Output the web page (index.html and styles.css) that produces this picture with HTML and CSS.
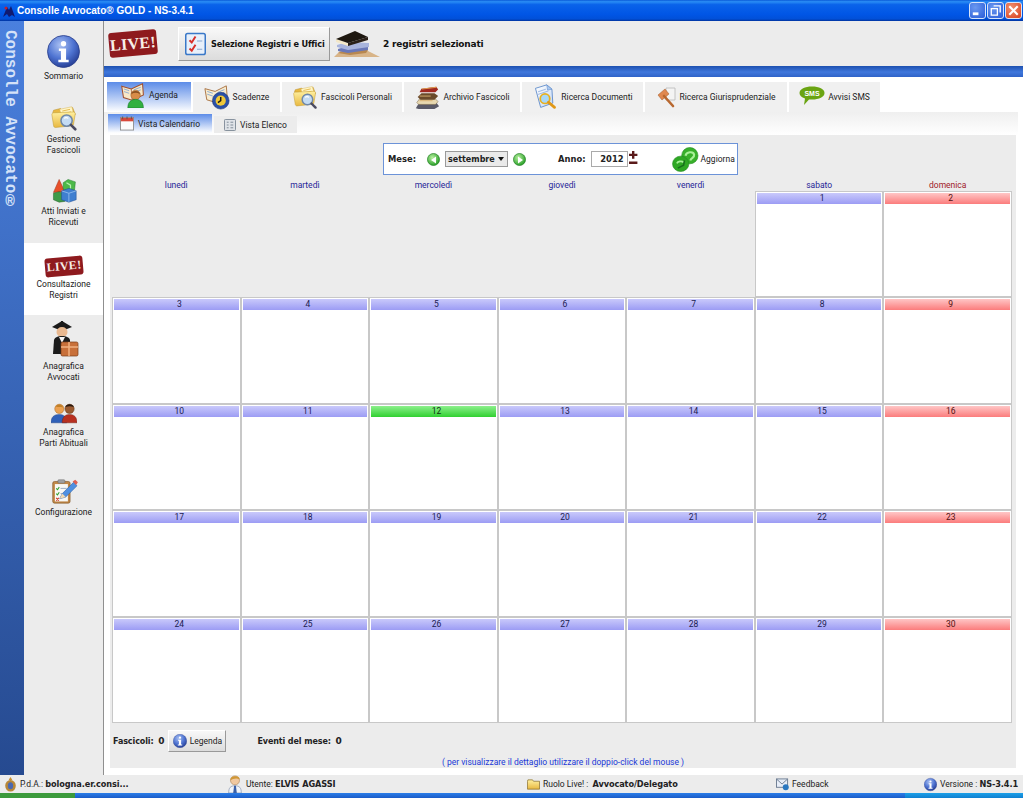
FILE: index.html
```html
<!DOCTYPE html>
<html lang="it">
<head>
    <meta charset="UTF-8">
    <title>Consolle Avvocato GOLD - NS-3.4.1</title>
    <link rel="stylesheet" href="styles.css">
</head>
<body>
    <!-- icone riutilizzate -->
    <svg class="sprite" aria-hidden="true">
        <defs>
            <radialGradient id="g-info" cx="40%" cy="30%" r="75%">
                <stop offset="0" stop-color="#a9c0f2"/><stop offset=".55" stop-color="#4f74d2"/><stop offset="1" stop-color="#22398f"/>
            </radialGradient>
            <linearGradient id="g-folder" x1="0" y1="0" x2="0" y2="1">
                <stop offset="0" stop-color="#fff0a0"/><stop offset="1" stop-color="#e8b840"/>
            </linearGradient>
            <radialGradient id="g-green" cx="40%" cy="35%" r="70%">
                <stop offset="0" stop-color="#b8f0a0"/><stop offset="1" stop-color="#1f9a20"/>
            </radialGradient>
            <linearGradient id="g-paper" x1="0" y1="0" x2="1" y2="1">
                <stop offset="0" stop-color="#ffffff"/><stop offset="1" stop-color="#c4d8f4"/>
            </linearGradient>
        </defs>
        <symbol id="i-info" viewBox="0 0 32 32">
            <circle cx="16" cy="16" r="15.5" fill="url(#g-info)" stroke="#2a3f8c" stroke-width=".8"/>
            <circle cx="16" cy="8.5" r="2.6" fill="#fff"/>
            <path d="M11.5 13h7v11h2.5v2.5h-10V24h2.5v-8.500h-2z" fill="#fff"/>
        </symbol>
        <symbol id="i-folder" viewBox="0 0 32 30">
            <path d="M3 9l1-3 8-2 2 2 12-3 3 8z" fill="#e8b840" stroke="#b89030" stroke-width=".6"/>
            <path d="M11 5l14-3 3 11-14 3z" fill="#fff6c8" stroke="#d8b860" stroke-width=".6"/>
            <path d="M14 7l9-2M15 10l9-2" stroke="#e0b040" stroke-width="1"/>
            <path d="M2 11c0-1 1-2 2-2l23-1c1 0 2 1 2 2l-2 12c0 1-1 2-2 2l-19 2c-1 0-2-1-2-2z" fill="url(#g-folder)" stroke="#c09a30" stroke-width=".6"/>
            <circle cx="19" cy="18" r="6.500" fill="#c4dcf4" stroke="#7088a8" stroke-width="1.800"/>
            <path d="M16 15.500a4 4 0 0 1 5 0" stroke="#fff" stroke-width="1.300" fill="none"/>
            <path d="M24 23l5 5" stroke="#4a4a60" stroke-width="3" stroke-linecap="round"/>
        </symbol>
        <symbol id="i-shapes" viewBox="0 0 32 32">
            <path d="M3 19L10 3l7 15z" fill="#e8502a" stroke="#9a2a10" stroke-width=".6"/>
            <path d="M15 7l6-4 9 3-1 10-6 2-8-3z" fill="#4cb848" stroke="#20782a" stroke-width=".6"/>
            <path d="M19 7l5 3v4" stroke="#b8f0b0" stroke-width="1.500" fill="none"/>
            <path d="M3 20l7-2 7 3v9l-7 1-7-3z" fill="#3f9a48" stroke="#28602a" stroke-width=".6"/>
            <path d="M13 17l9-3 9 3v11l-9 3-9-3z" fill="#3f7fd0" stroke="#1c4a90" stroke-width=".6"/>
            <path d="M13 17l9 3 9-3M22 20v11" stroke="#a0c8f4" stroke-width=".9" fill="none"/>
        </symbol>
        <symbol id="i-graduate" viewBox="0 0 30 38">
            <path d="M3 7l10-6 10 6-10 4z" fill="#1a1a1a"/>
            <path d="M13 4v-3" stroke="#1a1a1a" stroke-width="2"/>
            <ellipse cx="13" cy="12" rx="5.500" ry="5" fill="#e8b890"/>
            <path d="M4 34l1-14c1-3 4-4 8-4s7 1 8 4v14z" fill="#1c1c1c"/>
            <path d="M10 17l3 6 3-6z" fill="#f4f4f4"/>
            <rect x="12" y="22" width="17" height="14" rx="1.500" fill="#c8703a" stroke="#7a3c18" stroke-width=".7"/>
            <path d="M12 27h17M20 22v14" stroke="#f0b080" stroke-width="1.500"/>
        </symbol>
        <symbol id="i-people" viewBox="0 0 28 22">
            <circle cx="9" cy="6" r="5" fill="#eba050" stroke="#a06020" stroke-width=".5"/>
            <path d="M5 3.500c2-3 7-3 8 1-3-1-5 0-8-1z" fill="#c08028"/>
            <path d="M0 21c0-6 3-9 9-9 5 0 8 3 8 9z" fill="#3060b8" stroke="#1c3c80" stroke-width=".5"/>
            <circle cx="20" cy="6" r="5" fill="#9a5a30" stroke="#5a3010" stroke-width=".5"/>
            <path d="M15.500 4c1-4 8-4 9 0-3-1-6-1-9 0z" fill="#2a1a10"/>
            <path d="M12 21c0-6 3-9 8-9s8 3 8 9z" fill="#b83020" stroke="#701c10" stroke-width=".5"/>
        </symbol>
        <symbol id="i-config" viewBox="0 0 30 30">
            <rect x="2" y="4" width="20" height="25" rx="2" fill="#c08848" stroke="#7a5020" stroke-width=".7"/>
            <rect x="4.500" y="7" width="15" height="20" fill="#f8f8f4"/>
            <rect x="8" y="2" width="8" height="4" rx="1" fill="#a0a0a0" stroke="#606060" stroke-width=".5"/>
            <path d="M6 12l1.500 1.500 2-3M6 18l1.500 1.500 2-3" stroke="#30a030" stroke-width="1.200" fill="none"/>
            <path d="M6 23l3 3M9 23l-3 3" stroke="#d03020" stroke-width="1.200"/>
            <path d="M11 12h7M11 18h5" stroke="#90a0b8" stroke-width="1"/>
            <path d="M10 24l3-6L26 5l4 4-13 13z" fill="#4f90e0" stroke="#2a5aa0" stroke-width=".6"/>
            <path d="M10 24l3-6 4 4z" fill="#f0d8b0"/>
            <path d="M25 4l3-2 3 3-2 3z" fill="#e06050"/>
        </symbol>
        <symbol id="i-check" viewBox="0 0 28 30">
            <rect x="1" y="1" width="26" height="28" rx="2.500" fill="#e8f0fa" stroke="#3a78c8" stroke-width="2"/>
            <path d="M6 10l3 3 5-8M6 21l3 3 5-8" stroke="#d8302a" stroke-width="2.600" fill="none"/>
            <path d="M16 11h7M16 22h7" stroke="#8aa8d0" stroke-width="1.500"/>
        </symbol>
        <symbol id="i-books" viewBox="0 0 46 28">
            <path d="M0 27l6-6 26-1 14 7z" fill="#d8b488"/>
            <path d="M4 23l10-4 20 1-2 3-16 2z" fill="#b88850"/>
            <path d="M4 19l10-3 20 1v3l-20 3-10-2z" fill="#6a78b8"/>
            <path d="M3 15l10-3 22 1v4l-21 3-11-3z" fill="#a8b4dc"/>
            <path d="M2 9l12 4v3L2 12z" fill="#f4e8c8"/>
            <path d="M14 13l20-6v3L14 16z" fill="#2a2018"/>
            <path d="M2 9l19-8 13 6-20 6z" fill="#1e1810"/>
        </symbol>
        <symbol id="i-agenda" viewBox="0 0 28 30">
            <path d="M1 5l11 3 13-6 1 13-13 6L3 18z" fill="#f8e8c8" stroke="#a05030" stroke-width="1.200"/>
            <path d="M12 8l1 13" stroke="#a05030" stroke-width=".8"/>
            <path d="M3.500 8l6 2M3.500 11l6 2M15 9l8-3M15 12l8-3" stroke="#7aa0d0" stroke-width=".9"/>
            <circle cx="17" cy="15" r="5.500" fill="#d88c48" stroke="#8a5020" stroke-width=".5"/>
            <path d="M12 14c0-5 10-5 10 0-3-2-7-2-10 0z" fill="#8a5020"/>
            <path d="M8 30c0-7 4-10 9-10s9 3 9 10z" fill="#30b040" stroke="#1a7028" stroke-width=".6"/>
        </symbol>
        <symbol id="i-clock" viewBox="0 0 28 28">
            <path d="M1 5l11 3 12-6 1 12-12 6L3 17z" fill="#f8ecd0" stroke="#a87040" stroke-width="1"/>
            <path d="M3.500 8l6 2M3.500 11l6 2M15 9l7-3M15 12l7-3" stroke="#7aa0d0" stroke-width=".9"/>
            <circle cx="18" cy="18" r="9" fill="#2a50a8" stroke="#1a2f70" stroke-width=".6"/>
            <circle cx="18" cy="18" r="5.500" fill="#f0c838"/>
            <path d="M18 14v4l-3 2" stroke="#1a1a1a" stroke-width="1.600" fill="none"/>
        </symbol>
        <symbol id="i-archive" viewBox="0 0 28 28">
            <path d="M2 26l3-5 19-1 3 4-5 3H5z" fill="#5a5a68"/>
            <path d="M3 20l3-4h17l3 3-3 3H5z" fill="#e8d8b0" stroke="#6a5a40" stroke-width=".5"/>
            <path d="M4 14l4-4h14l4 3-4 4H7z" fill="#6a4a2a"/>
            <path d="M6 9l2-4 16-2 2 3-3 3H8z" fill="#a02820"/>
            <path d="M8 5l16-2 .6 1L8.600 6z" fill="#e0a050"/>
            <path d="M6 13h12M6 18h14" stroke="#d8b070" stroke-width="1"/>
        </symbol>
        <symbol id="i-docsearch" viewBox="0 0 28 30">
            <path d="M3 5l13-4 6 5 1 16-14 5z" fill="url(#g-paper)" stroke="#5a88c8" stroke-width="1"/>
            <path d="M16 1l1 6 5-1z" fill="#a8c8f0" stroke="#5a88c8" stroke-width=".6"/>
            <path d="M6 9l9-3M6 12l12-4" stroke="#88a8d8" stroke-width=".9"/>
            <circle cx="14" cy="17" r="5.500" fill="#a8d8f8" stroke="#e8b020" stroke-width="2"/>
            <path d="M18 21l7 6" stroke="#e09818" stroke-width="3.200" stroke-linecap="round"/>
        </symbol>
        <symbol id="i-gavel" viewBox="0 0 20 22">
            <path d="M9 2h9v12H9z" fill="#f4f4f4" stroke="#b8b8b8" stroke-width=".8"/>
            <path d="M1 9l7-6 4 5-7 6z" fill="#e08850" stroke="#a05828" stroke-width=".5"/>
            <path d="M7 10l9 10" stroke="#b86830" stroke-width="2.600" stroke-linecap="round"/>
        </symbol>
        <symbol id="i-calendar" viewBox="0 0 16 16">
            <rect x=".5" y="1" width="15" height="14.500" fill="#fbfbfb" stroke="#8a8a8a"/>
            <rect x="1" y="1.500" width="14" height="4" fill="#d8483a"/>
            <path d="M3 0v3M8 0v3M13 0v3" stroke="#555" stroke-width="1"/>
        </symbol>
        <symbol id="i-list" viewBox="0 0 13 13">
            <rect x=".5" y=".5" width="12" height="12" rx="1" fill="#dfe3e8" stroke="#7b8794"/>
            <path d="M3 3.500h2M7 3.500h3M3 6.500h2M7 6.500h3M3 9.500h2M7 9.500h3" stroke="#7b8794"/>
        </symbol>
        <symbol id="i-round" viewBox="0 0 14 14">
            <circle cx="7" cy="7" r="6.500" fill="url(#g-green)" stroke="#1a7a1a" stroke-width=".7"/>
        </symbol>
        <symbol id="i-refresh" viewBox="0 0 28 26">
            <circle cx="18.500" cy="9" r="8.500" fill="#38b02a" stroke="#1f8a20" stroke-width=".6"/>
            <ellipse cx="9" cy="17.500" rx="8.500" ry="8" fill="#2fa824" stroke="#1f8a20" stroke-width=".6"/>
            <path d="M14 9c1-4 8-5 9-1 .500 3-3 3-4 6" stroke="#a8f098" stroke-width="2.200" fill="none"/>
            <path d="M5 17c1-2 5-3 7-1" stroke="#a8f098" stroke-width="1.800" fill="none"/>
            <path d="M6 22l6-3 1-5" stroke="#176f1c" stroke-width="1.600" fill="none"/>
        </symbol>
        <symbol id="i-emblem" viewBox="0 0 13 17">
            <path d="M6.500 0l2 3-2 1-2-1z" fill="#c89030"/>
            <ellipse cx="6.500" cy="10" rx="6" ry="6.500" fill="#b88838"/>
            <ellipse cx="6.500" cy="10" rx="3" ry="4" fill="#4a68b0"/>
        </symbol>
        <symbol id="i-user" viewBox="0 0 16 20">
            <circle cx="8" cy="6" r="5" fill="#f0c8a0" stroke="#a07a50" stroke-width=".6"/>
            <path d="M3 6c-1-6 11-6 10-1-3-2-7-1-10 1z" fill="#d09838"/>
            <path d="M1 20c0-6 2-8 7-8s7 2 7 8z" fill="#f0f4fa" stroke="#7a8aa8" stroke-width=".7"/>
            <path d="M7 12h2l1 8H6z" fill="#3a60a8"/>
        </symbol>
        <symbol id="i-smallfolder" viewBox="0 0 14 11">
            <path d="M.5 2l.5-1.500h5L7 2h6.500v8.500H.5z" fill="url(#g-folder)" stroke="#8a7030" stroke-width=".8"/>
        </symbol>
        <symbol id="i-feedback" viewBox="0 0 14 13">
            <rect x=".5" y=".5" width="12" height="9" fill="#e8eef8" stroke="#6a7a90"/>
            <path d="M1 1l5.500 5L12 1" stroke="#6a7a90" fill="none"/>
            <circle cx="10.500" cy="9.500" r="3.200" fill="#2a78c0"/>
        </symbol>
    </svg>

    <div class="window">
        <div class="titlebar">
            <svg class="title-logo" viewBox="0 0 14 14"><path d="M1 13L5 3l2 3 2-4 4 11-3-2-3 2-2-3z" fill="#101a70"/><circle cx="4" cy="4" r="1.500" fill="#c02030"/></svg>
            <span class="title-text">Consolle Avvocato® GOLD - NS-3.4.1</span>
            <div class="win-controls">
                <div class="win-btn">
                    <svg viewBox="0 0 16 16"><rect x="3" y="10" width="6" height="3" fill="#fff"/></svg>
                </div>
                <div class="win-btn">
                    <svg viewBox="0 0 16 16"><path d="M6 3h7v7M3.500 6H10v7H3.500z" stroke="#fff" stroke-width="1.400" fill="none"/></svg>
                </div>
                <div class="win-btn close">
                    <svg viewBox="0 0 16 16"><path d="M3.500 3.500l9 9M12.500 3.500l-9 9" stroke="#fff" stroke-width="2.200"/></svg>
                </div>
            </div>
        </div>

        <div class="app">
            <div class="strip"><span class="strip-text">Consolle Avvocato®</span></div>

            <nav class="sidebar">
                <div class="nav-item up">
                    <svg class="ico-33"><use href="#i-info"/></svg>
                    <span class="nav-label">Sommario</span>
                </div>
                <div class="nav-item up">
                    <svg class="ico-30"><use href="#i-folder"/></svg>
                    <span class="nav-label">Gestione<br>Fascicoli</span>
                </div>
                <div class="nav-item up">
                    <svg class="ico-30"><use href="#i-shapes"/></svg>
                    <span class="nav-label">Atti Inviati e<br>Ricevuti</span>
                </div>
                <div class="nav-item active">
                    <div class="live small">LIVE!</div>
                    <span class="nav-label">Consultazione<br>Registri</span>
                </div>
                <div class="nav-item">
                    <svg class="ico-grad"><use href="#i-graduate"/></svg>
                    <span class="nav-label">Anagrafica<br>Avvocati</span>
                </div>
                <div class="nav-item down">
                    <svg class="ico-people"><use href="#i-people"/></svg>
                    <span class="nav-label">Anagrafica<br>Parti Abituali</span>
                </div>
                <div class="nav-item down">
                    <svg class="ico-30"><use href="#i-config"/></svg>
                    <span class="nav-label">Configurazione</span>
                </div>
            </nav>

            <main class="main">
                <div class="topbar">
                    <div class="live">LIVE!</div>
                    <button class="select-btn">
                        <svg class="ico-check"><use href="#i-check"/></svg>
                        Selezione Registri e Uffici
                    </button>
                    <svg class="ico-books"><use href="#i-books"/></svg>
                    <span class="selected-count">2 registri selezionati</span>
                </div>
                <div class="blue-bar"></div>

                <div class="tabs">
                    <div class="tab active"><svg class="ico-tab"><use href="#i-agenda"/></svg>Agenda</div>
                    <div class="tab"><svg class="ico-tab"><use href="#i-clock"/></svg>Scadenze</div>
                    <div class="tab"><svg class="ico-tab"><use href="#i-folder"/></svg>Fascicoli Personali</div>
                    <div class="tab"><svg class="ico-tab"><use href="#i-archive"/></svg>Archivio Fascicoli</div>
                    <div class="tab"><svg class="ico-tab"><use href="#i-docsearch"/></svg>Ricerca Documenti</div>
                    <div class="tab"><svg class="ico-gavel"><use href="#i-gavel"/></svg>Ricerca Giurisprudenziale</div>
                    <div class="tab">
                        <svg class="ico-sms" viewBox="0 0 26 20">
                            <path d="M13 .5c7 0 12.500 2.500 12.500 6.500S20 13.500 13 13.500c-1 0-2 0-3-.1L5 19l1-6.500C2.500 11.500.5 9.500.5 7 .5 3 6 .5 13 .5z" fill="#6aa412"/>
                            <text x="13" y="10" class="sms-text">SMS</text>
                        </svg>Avvisi SMS
                    </div>
                </div>

                <div class="subtabs">
                    <div class="subtab active"><svg class="ico-cal"><use href="#i-calendar"/></svg>Vista Calendario</div>
                    <div class="subtab"><svg class="ico-list"><use href="#i-list"/></svg>Vista Elenco</div>
                </div>

                <section class="panel">
                    <div class="month-box">
                        <b class="lbl">Mese:</b>
                        <svg class="ico-round first"><use href="#i-round"/><path d="M9 3.500v7L4 7z" fill="#fff"/></svg>
                        <div class="month-select">settembre<span class="caret"></span></div>
                        <svg class="ico-round"><use href="#i-round"/><path d="M5 3.500v7L10 7z" fill="#fff"/></svg>
                        <b class="lbl year-lbl">Anno:</b>
                        <div class="year-input">2012</div>
                        <svg class="stepper" viewBox="0 0 9 14"><path d="M3 0h2.400v2.800h3v2.200h-3v2.800H3V5H0V2.800h3zM0 10.500h8.400V13H0z" fill="#5a1a1a"/></svg>
                        <svg class="ico-refresh"><use href="#i-refresh"/></svg>
                        <span class="refresh-label">Aggiorna</span>
                    </div>

                    <div class="week-head">
                        <span>lunedì</span><span>martedì</span><span>mercoledì</span><span>giovedì</span><span>venerdì</span><span>sabato</span><span class="sun">domenica</span>
                    </div>
                    <div class="calendar" id="calendar"></div>

                    <div class="panel-foot">
                        <b class="foot-lbl">Fascicoli: <span class="foot-num">0</span></b>
                        <button class="legend-btn"><svg class="ico-16"><use href="#i-info"/></svg>Legenda</button>
                        <b class="foot-lbl events">Eventi del mese: <span class="foot-num">0</span></b>
                    </div>
                    <p class="hint">( per visualizzare il dettaglio utilizzare il doppio-click del mouse )</p>
                </section>
            </main>
        </div>

        <footer class="statusbar">
            <div class="st st-pda"><svg class="ico-st"><use href="#i-emblem"/></svg><span>P.d.A.: <b>bologna.er.consi...</b></span></div>
            <div class="st st-user"><svg class="ico-user"><use href="#i-user"/></svg><span>Utente: <b>ELVIS AGASSI</b></span></div>
            <div class="st st-role"><svg class="ico-st"><use href="#i-smallfolder"/></svg><span>Ruolo Live! : <b>Avvocato/Delegato</b></span></div>
            <div class="st st-feedback"><svg class="ico-st"><use href="#i-feedback"/></svg><span>Feedback</span></div>
            <div class="st st-version"><svg class="ico-st"><use href="#i-info"/></svg><span>Versione : <b>NS-3.4.1</b></span></div>
        </footer>
        <div class="taskbar"><div class="start"></div><div class="tasks"></div><div class="tray"></div></div>
    </div>

    <script>
        // settembre 2012: il giorno 1 cade di sabato
        var calendar = document.getElementById('calendar');
        for (var i = 0; i < 5; i++) {
            calendar.appendChild(document.createElement('div'));
        }
        for (var d = 1; d <= 30; d++) {
            var cell = document.createElement('div');
            cell.className = 'day';
            var head = document.createElement('div');
            head.className = 'day-head';
            if ((d + 5) % 7 === 0) head.className += ' sunday';
            if (d === 12) head.className += ' today';
            head.textContent = d;
            cell.appendChild(head);
            calendar.appendChild(cell);
        }
    </script>
</body>
</html>
```
FILE: styles.css
```css
* {
    box-sizing: border-box;
}
html, body {
    margin: 0;
    height: 100%;
    overflow: hidden;
}
body {
    font-family: 'Roboto', 'Liberation Sans', sans-serif;
    font-size: 8.5px;
    color: #222;
    background: #ececec;
}
.sprite {
    display: block;
    width: 0;
    height: 0;
}
.window {
    width: 1023px;
    height: 798px;
    display: flex;
    flex-direction: column;
}

/* barra del titolo */
.titlebar {
    height: 21px;
    flex-shrink: 0;
    display: flex;
    align-items: center;
    padding-left: 2px;
    background: linear-gradient(#0a5ad8 0, #2a8df5 8%, #0a63ea 22%, #0055e5 70%, #0150d8 90%, #00339f 100%);
}
.title-logo {
    width: 14px;
    height: 14px;
}
.title-text {
    margin-left: 1px;
    font-family: 'Liberation Sans', sans-serif;
    font-weight: bold;
    font-size: 10px;
    color: #fff;
}
.win-controls {
    margin-left: auto;
    margin-right: 1px;
    display: flex;
    gap: 1px;
}
.win-btn {
    width: 17px;
    height: 17px;
    border: 1px solid #d8e4fa;
    border-radius: 3px;
    background: radial-gradient(circle at 35% 30%, #6a98f0, #2a5cd8);
}
.win-btn svg {
    display: block;
    width: 15px;
    height: 15px;
}
.win-btn.close {
    background: radial-gradient(circle at 35% 30%, #f09070, #d8401c);
}

.app {
    flex: 1;
    display: flex;
    min-height: 0;
}
.strip {
    width: 24px;
    padding-top: 9px;
    background: linear-gradient(#4a80de, #264a90);
}
.strip-text {
    writing-mode: vertical-rl;
    font-family: 'Liberation Mono', monospace;
    font-weight: bold;
    font-size: 16px;
    line-height: 20px;
    color: #d4e2f8;
}

/* menu laterale */
.sidebar {
    width: 80px;
    padding-top: 6px;
    background: #ececec;
    border-right: 1px solid #8f8f8f;
}
.nav-item {
    height: 72px;
    display: flex;
    flex-direction: column;
    align-items: center;
    justify-content: center;
    gap: 3px;
}
.nav-item.active {
    background: #fff;
}
.nav-item.up {
    padding-bottom: 9px;
}
.nav-item.down {
    padding-top: 6px;
}
.nav-label {
    text-align: center;
    line-height: 11px;
}
.ico-33 { width: 33px; height: 33px; }
.ico-30 { width: 28px; height: 26px; }
.ico-grad { width: 30px; height: 38px; }
.ico-people { width: 26px; height: 21px; }
.ico-16 { width: 14px; height: 14px; }

.live {
    width: 48px;
    height: 25px;
    display: flex;
    align-items: center;
    justify-content: center;
    font-family: 'Liberation Serif', serif;
    font-weight: bold;
    font-size: 16px;
    color: #f8efe8;
    background: #8e1a1e;
    border-radius: 3px;
    transform: rotate(-5deg);
    letter-spacing: .3px;
}
.live.small {
    width: 38px;
    height: 19px;
    font-size: 12px;
}

/* area principale */
.main {
    flex: 1;
    min-width: 0;
    display: flex;
    flex-direction: column;
    background: #fff;
}
.topbar {
    height: 45px;
    flex-shrink: 0;
    display: flex;
    align-items: center;
    padding-left: 5px;
    background: #ececec;
}
.select-btn {
    width: 152px;
    height: 34px;
    margin-left: 21px;
    display: flex;
    align-items: center;
    gap: 5px;
    padding: 0 0 0 6px;
    font-family: 'DejaVu Sans', sans-serif;
    font-weight: bold;
    font-size: 8.2px;
    letter-spacing: -.2px;
    color: #111;
    background: linear-gradient(#f8f8f8, #dcdcdc);
    border: 1px solid #fff;
    border-right-color: #999;
    border-bottom-color: #999;
}
.ico-check { width: 21px; height: 24px; }
.ico-books { width: 46px; height: 28px; margin-left: 4px; }
.selected-count {
    margin-left: 3px;
    font-family: 'DejaVu Sans', sans-serif;
    font-weight: bold;
    font-size: 9px;
    letter-spacing: -.2px;
    color: #111;
}
.blue-bar {
    height: 11px;
    flex-shrink: 0;
    background: linear-gradient(#1d50b0, #3f77dc 55%, #2f63c8);
}
.tabs {
    display: grid;
    grid-template-columns: 84px 87px 120px 116px 121px 142px 91px;
    gap: 2px;
    height: 28px;
    flex-shrink: 0;
    margin: 5px 0 2px 3px;
}
.tab {
    display: flex;
    align-items: center;
    justify-content: center;
    gap: 3px;
    background: #f0f0f0;
}
.tab.active {
    padding-bottom: 4px;
    background: linear-gradient(#5c8ce8, #ffffff);
}
.ico-tab { width: 26px; height: 26px; }
.ico-gavel { width: 20px; height: 22px; }
.ico-sms { width: 26px; height: 20px; margin-bottom: 3px; }
.sms-text {
    font-family: 'Liberation Sans', sans-serif;
    font-weight: bold;
    font-size: 7px;
    fill: #fff;
    text-anchor: middle;
}
.subtabs {
    height: 23px;
    flex-shrink: 0;
    margin-right: 5px;
    padding: 2px 0 0 4px;
    display: flex;
    gap: 2px;
    background: linear-gradient(#efefef, #ffffff);
}
.subtab {
    width: 83px;
    height: 17px;
    margin-top: 2px;
    display: flex;
    align-items: center;
    justify-content: center;
    gap: 4px;
    background: #ececec;
}
.subtab.active {
    width: 104px;
    height: 19px;
    margin-top: 0;
    background: linear-gradient(#5c8ce8, #ffffff);
}
.ico-cal { width: 14px; height: 15px; }
.ico-list { width: 12px; height: 12px; }

/* pannello calendario */
.panel {
    flex: 1;
    min-height: 0;
    margin: 0 7px 7px 6px;
    padding: 8px 2px 0;
    background: #ececec;
    display: flex;
    flex-direction: column;
}
.month-box {
    align-self: center;
    width: 355px;
    height: 32px;
    flex-shrink: 0;
    margin-right: 5px;
    display: flex;
    align-items: center;
    padding-left: 4px;
    background: #fff;
    border: 1px solid #6c93d8;
}
.lbl {
    font-family: 'DejaVu Sans', sans-serif;
    font-size: 8.4px;
}
.ico-round { width: 13px; height: 13px; margin: 0 5px; }
.ico-round.first { margin-left: 11px; }
.month-select {
    width: 63px;
    height: 16px;
    display: flex;
    align-items: center;
    justify-content: space-between;
    padding: 0 3px 0 2px;
    font-family: 'DejaVu Sans', sans-serif;
    font-weight: bold;
    font-size: 8px;
    background: #eaeaea;
    border: 1px solid #9a9a9a;
}
.caret {
    width: 0;
    height: 0;
    border: 3.500px solid transparent;
    border-top: 4px solid #111;
    border-bottom: 0;
}
.year-lbl { margin-left: 27px; }
.year-input {
    width: 37px;
    height: 16px;
    margin-left: 5px;
    padding-right: 3px;
    line-height: 14px;
    text-align: right;
    font-family: 'DejaVu Sans', sans-serif;
    font-weight: bold;
    font-size: 8.4px;
    border: 1px solid #aaa;
}
.stepper {
    width: 9px;
    height: 14px;
    margin-left: 1px;
    margin-top: -3px;
}
.ico-refresh { width: 27px; height: 25px; margin-left: 34px; }
.refresh-label { margin-left: 2px; }
.week-head {
    display: grid;
    grid-template-columns: repeat(7, 1fr);
    width: 900px;
    height: 12px;
    flex-shrink: 0;
    margin-top: 4px;
    align-items: center;
    text-align: center;
    color: #1f1f98;
}
.week-head .sun {
    color: #a02028;
}
.calendar {
    display: grid;
    grid-template-columns: repeat(7, 1fr);
    grid-auto-rows: 1fr;
    width: 900px;
    height: 532px;
    flex-shrink: 0;
}
.day {
    padding: 1px;
    background: #fff;
    border: 1px solid #c8c8c8;
}
.day-head {
    height: 11px;
    padding-left: 6px;
    line-height: 11px;
    text-align: center;
    color: #1a1a50;
    background: linear-gradient(#c9c9fb, #9c9cf4);
}
.day-head.sunday {
    color: #501010;
    background: linear-gradient(#ffc6c6, #fb7c7c);
}
.day-head.today {
    color: #103010;
    background: linear-gradient(#8cf08c, #30d030);
}
.panel-foot {
    display: flex;
    align-items: center;
    height: 22px;
    flex-shrink: 0;
    margin-top: 7px;
    padding-left: 1px;
}
.foot-lbl {
    font-family: 'DejaVu Sans', sans-serif;
    font-size: 8px;
    letter-spacing: -.1px;
}
.foot-num {
    margin-left: 2px;
    font-size: 9px;
}
.legend-btn {
    width: 58px;
    height: 22px;
    margin-left: 4px;
    display: flex;
    align-items: center;
    justify-content: center;
    gap: 3px;
    padding: 0;
    font: inherit;
    color: #222;
    background: linear-gradient(#f8f8f8, #dcdcdc);
    border: 1px solid #fff;
    border-right-color: #999;
    border-bottom-color: #999;
}
.events {
    margin-left: 31px;
}
.hint {
    margin: 4px 0 0;
    line-height: 12px;
    text-align: center;
    color: #2038d8;
}

/* barra di stato */
.statusbar {
    height: 18px;
    flex-shrink: 0;
    display: flex;
    align-items: center;
    background: #ececec;
}
.st {
    display: flex;
    align-items: center;
    gap: 3px;
}
.st b {
    font-family: 'DejaVu Sans', sans-serif;
    font-size: 8.2px;
    letter-spacing: -.1px;
}
.st-role b {
    margin-left: 2px;
}
.st-pda { width: 227px; padding-left: 4px; }
.st-user { width: 299px; }
.st-role { width: 250px; padding-left: 1px; }
.st-feedback { width: 147px; }
.st-version { flex: 1; padding-left: 1px; }
.ico-st { width: 13px; height: 15px; }
.ico-user { width: 16px; height: 18px; }
.taskbar {
    height: 5px;
    flex-shrink: 0;
    display: flex;
}
.start { width: 75px; background: #3c9a3c; }
.tasks { flex: 1; background: linear-gradient(#2b7de8, #1a5cc8); }
.tray { width: 118px; background: linear-gradient(#1ca0e8, #1080d0); }
```
